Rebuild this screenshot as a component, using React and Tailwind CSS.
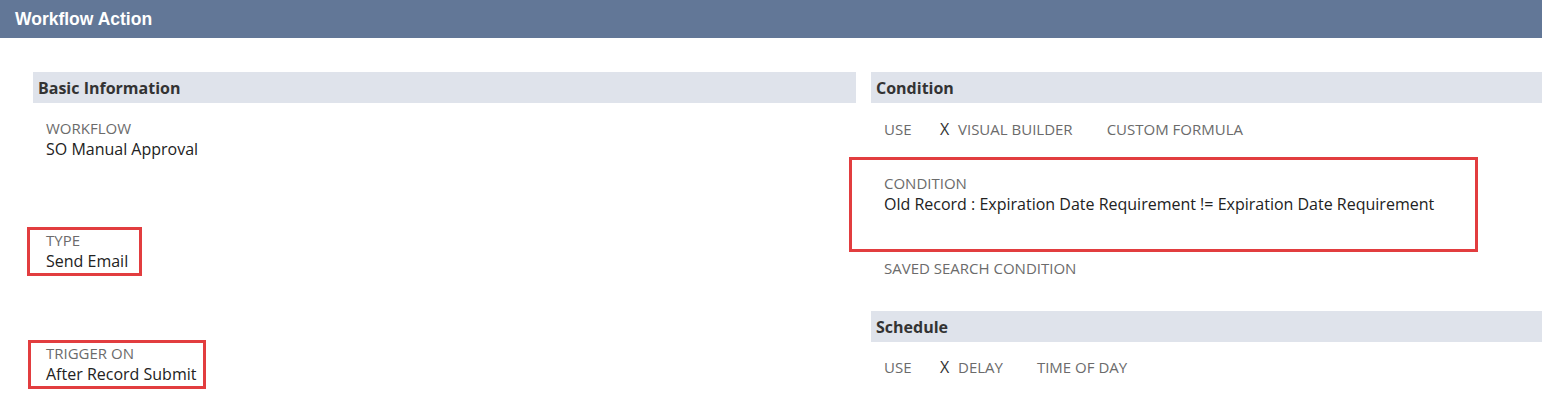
import React from 'react'

// ─── Section bar ──────────────────────────────────────────────────────────────
function SectionBar({ children }) {
  return (
    <div className="h-[31px] bg-[#dfe3eb] pl-[5px] flex items-center text-[16px] font-bold text-[#333333]">
      {children}
    </div>
  )
}

// ─── Field ────────────────────────────────────────────────────────────────────
function Label({ children }) {
  return <div className="h-[19px] leading-[19px] text-[15px] text-[#6b6b6b] uppercase whitespace-nowrap">{children}</div>
}

function Value({ children }) {
  return <div className="h-[22px] leading-[22px] text-[16px] text-[#222222] whitespace-nowrap">{children}</div>
}

// ─── Use row (radio-ish options) ──────────────────────────────────────────────
function UseRow({ options }) {
  return (
    <div className="h-[20px] pl-[13px] flex items-center text-[15px] text-[#6b6b6b] uppercase whitespace-nowrap">
      <span className="w-[56px]">Use</span>
      <span className="w-[18px] text-[#333333] text-[16px]">X</span>
      <span className="mr-[34px]">{options[0]}</span>
      <span>{options[1]}</span>
    </div>
  )
}

export default function App() {
  return (
    <div className="w-[1542px] h-[395px] overflow-hidden bg-white font-['Open_Sans',sans-serif]">
      {/* Title bar */}
      <div className="h-[38px] bg-[#627797] pl-[15px] flex items-center">
        <span className="font-['Liberation_Sans',Arial,sans-serif] font-bold text-[17.5px] text-white">
          Workflow Action
        </span>
      </div>

      <div className="mt-[34px] pl-[33px] grid grid-cols-[823px_1fr] gap-x-[15px]">
        {/* Left: basic information */}
        <div className="flex flex-col">
          <SectionBar>Basic Information</SectionBar>
          <div className="mt-[16px] pl-[13px]">
            <Label>Workflow</Label>
            <Value>SO Manual Approval</Value>
          </div>
          <div className="mt-[67px] ml-[-6px] w-[115px] border-[3px] border-[#e23d3f] pl-[16px] pt-[1px] pb-[1px]">
            <Label>Type</Label>
            <Value>Send Email</Value>
          </div>
          <div className="mt-[64px] ml-[-5px] w-[178px] border-[3px] border-[#e23d3f] pl-[15px] pt-[1px] pb-[1px]">
            <Label>Trigger On</Label>
            <Value>After Record Submit</Value>
          </div>
        </div>

        {/* Right: condition + schedule */}
        <div className="flex flex-col">
          <SectionBar>Condition</SectionBar>
          <div className="mt-[16px]">
            <UseRow options={['Visual Builder', 'Custom Formula']} />
          </div>
          <div className="mt-[18px] ml-[-22px] w-[629px] h-[95px] border-[3px] border-[#e23d3f] pl-[32px] pt-[14px]">
            <Label>Condition</Label>
            <Value>Old Record : Expiration Date Requirement != Expiration Date Requirement</Value>
          </div>
          <div className="mt-[6px] pl-[13px] h-[20px] leading-[20px] text-[15px] text-[#6b6b6b] uppercase">
            Saved Search Condition
          </div>
          <div className="mt-[33px]">
            <SectionBar>Schedule</SectionBar>
          </div>
          <div className="mt-[15px]">
            <UseRow options={['Delay', 'Time of Day']} />
          </div>
        </div>
      </div>
    </div>
  )
}
